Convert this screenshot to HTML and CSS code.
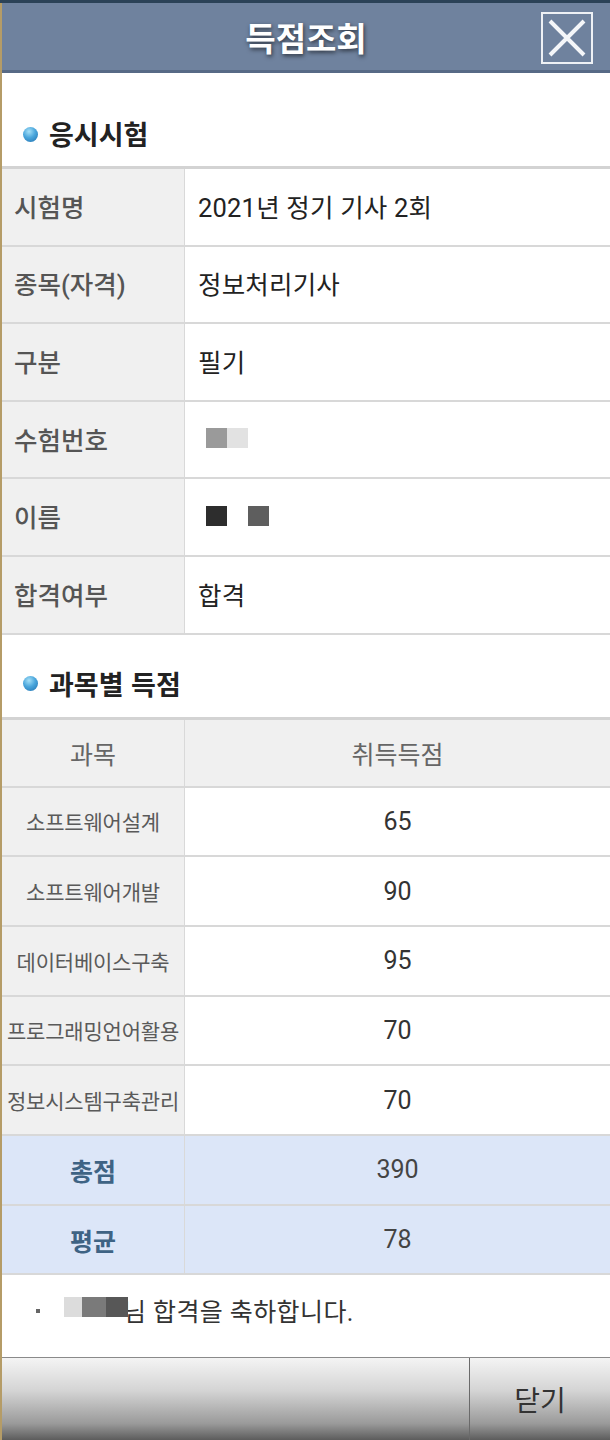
FILE: index.html
```html
<!DOCTYPE html>
<html lang="ko">
<head>
<meta charset="utf-8">
<title>득점조회</title>
<link rel="stylesheet" href="styles.css">
</head>
<body>
<div class="topstrip"></div>
<div class="page">
  <header class="titlebar">
    <h1 class="title">득점조회</h1>
    <button class="close-x" aria-label="닫기">
      <svg width="48" height="48" viewBox="0 0 48 48">
        <path d="M7 7 L41 41 M41 7 L7 41" stroke="#f4f6f9" stroke-width="4" fill="none"/>
      </svg>
    </button>
  </header>

  <h2 class="section first"><span class="dot"></span>응시시험</h2>
  <div class="info">
    <div class="row"><div class="lbl">시험명</div><div class="val">2021년 정기 기사 2회</div></div>
    <div class="row"><div class="lbl">종목(자격)</div><div class="val">정보처리기사</div></div>
    <div class="row"><div class="lbl">구분</div><div class="val">필기</div></div>
    <div class="row"><div class="lbl">수험번호</div><div class="val"><span class="blk b1"></span><span class="blk b2"></span></div></div>
    <div class="row"><div class="lbl">이름</div><div class="val"><span class="blk b3"></span><span class="gap"></span><span class="blk b4"></span></div></div>
    <div class="row"><div class="lbl">합격여부</div><div class="val">합격</div></div>
  </div>

  <h2 class="section second"><span class="dot"></span>과목별 득점</h2>
  <div class="scores">
    <div class="srow head"><div class="sl">과목</div><div class="sv">취득득점</div></div>
    <div class="srow"><div class="sl small">소프트웨어설계</div><div class="sv">65</div></div>
    <div class="srow"><div class="sl small">소프트웨어개발</div><div class="sv">90</div></div>
    <div class="srow"><div class="sl small">데이터베이스구축</div><div class="sv">95</div></div>
    <div class="srow"><div class="sl small">프로그래밍언어활용</div><div class="sv">70</div></div>
    <div class="srow"><div class="sl small">정보시스템구축관리</div><div class="sv">70</div></div>
    <div class="srow sum"><div class="sl">총점</div><div class="sv">390</div></div>
    <div class="srow sum"><div class="sl">평균</div><div class="sv">78</div></div>
  </div>

  <p class="msg"><span class="sq"></span><span class="redact"><span class="r1"></span><span class="r2"></span><span class="r3"></span></span><span class="msgtext">님 합격을 축하합니다.</span></p>

  <footer class="bottombar">
    <div class="spacer"></div>
    <button class="closebtn">닫기</button>
  </footer>
</div>
</body>
</html>
```
FILE: styles.css
```css
html, body {
  margin: 0;
  padding: 0;
  background: #ffffff;
}
body {
  width: 610px;
  font-family: Roboto, "Noto Sans CJK KR", sans-serif;
}
.topstrip {
  height: 3px;
  background: #2b4257;
}
.page {
  border-left: 2px solid #b59c67;
}
.titlebar {
  position: relative;
  height: 67px;
  background: #6f829e;
  border-bottom: 3px solid #576a86;
  display: flex;
  align-items: center;
  justify-content: center;
}
.title {
  margin: 0;
  font-size: 33px;
  font-weight: 700;
  color: #ffffff;
  text-shadow: 1px 2px 4px rgba(0, 0, 0, 0.6);
  font-family: "Noto Sans CJK KR", sans-serif;
}
.close-x {
  position: absolute;
  right: 17px;
  top: 9px;
  width: 52px;
  height: 52px;
  padding: 0;
  margin: 0;
  background: transparent;
  border: 2px solid #eef1f5;
  display: flex;
  align-items: center;
  justify-content: center;
}
.section {
  margin: 0;
  display: flex;
  align-items: center;
  font-family: "Noto Sans CJK KR", sans-serif;
  font-size: 27px;
  font-weight: 700;
  color: #222222;
  line-height: 32px;
  padding-left: 21px;
}
.section.first {
  padding-top: 45px;
  padding-bottom: 16px;
}
.section.second {
  padding-top: 33px;
  padding-bottom: 17px;
}
.dot {
  width: 15px;
  height: 15px;
  border-radius: 50%;
  margin-right: 11px;
  background: radial-gradient(circle at 40% 30%, #a6e0f7 0%, #4aa6dc 45%, #1f6fae 100%);
}
.info {
  border-top: 3px solid #d3d3d3;
}
.row {
  display: grid;
  grid-template-columns: 183px 1fr;
  height: 75.6px;
  border-bottom: 2px solid #d8d8d8;
  font-size: 25.5px;
}
.lbl {
  background: #f0f0f0;
  border-right: 1px solid #d9d9d9;
  color: #555555;
  font-weight: 500;
  display: flex;
  align-items: center;
  padding-left: 12px;
  padding-bottom: 3px;
}
.val {
  display: flex;
  align-items: center;
  padding-left: 13px;
  padding-bottom: 3px;
  color: #222222;
  letter-spacing: 0.2px;
}
.blk {
  display: inline-block;
  width: 21px;
  height: 20px;
}
.b1 { background: #9a9a9a; margin-left: 8px; }
.b2 { background: #e2e2e2; }
.b3 { background: #2d2d2d; margin-left: 8px; }
.b4 { background: #5e5e5e; }
.gap { display: inline-block; width: 21px; }
.scores {
  border-top: 3px solid #d3d3d3;
}
.srow {
  display: grid;
  grid-template-columns: 183px 1fr;
  height: 67.7px;
  border-bottom: 2px solid #d8d8d8;
  font-size: 25px;
}
.srow.head {
  height: 66px;
  background: #f0f0f0;
}
.sl {
  background: #f0f0f0;
  border-right: 1px solid #d9d9d9;
  color: #555555;
  display: flex;
  align-items: center;
  justify-content: center;
}
.sl.small {
  font-size: 21px;
  color: #5a5a5a;
  letter-spacing: -0.2px;
}
.sv {
  display: flex;
  align-items: center;
  justify-content: center;
  color: #333333;
}
.head .sl, .head .sv {
  color: #666666;
}
.srow.sum {
  background: #dce6f8;
}
.sum .sl {
  background: #dce6f8;
  color: #3e6384;
  font-weight: 700;
}
.sum .sv {
  color: #444444;
}
.msg {
  margin: 0;
  height: 70px;
  padding-bottom: 12px;
  display: flex;
  align-items: center;
  padding-left: 34px;
  font-size: 25px;
  color: #333333;
}
.sq {
  width: 4px;
  height: 4px;
  background: #666666;
  margin-right: 24px;
  margin-top: 2px;
}
.redact {
  display: flex;
  position: relative;
  z-index: 1;
  margin-right: -5px;
  margin-top: -6px;
}
.redact span {
  display: block;
  height: 20px;
}
.r1 { width: 18px; background: #dcdcdc; }
.r2 { width: 24px; background: #7a7a7a; }
.r3 { width: 22px; background: #575757; }
.msgtext {
  position: relative;
  letter-spacing: 0.4px;
}
.bottombar {
  height: 82px;
  border-top: 1px solid #8a8a8a;
  background: linear-gradient(to bottom, #f4f4f4 0%, #d4d4d4 40%, #9a9a9a 80%, #5c5c5c 100%);
  display: flex;
}
.spacer {
  width: 467px;
  border-right: 1px solid #6a6a6a;
}
.closebtn {
  flex: 1;
  background: transparent;
  border: none;
  padding: 0;
  margin: 0;
  font-family: "Noto Sans CJK KR", sans-serif;
  font-size: 28px;
  color: #333333;
}
```
